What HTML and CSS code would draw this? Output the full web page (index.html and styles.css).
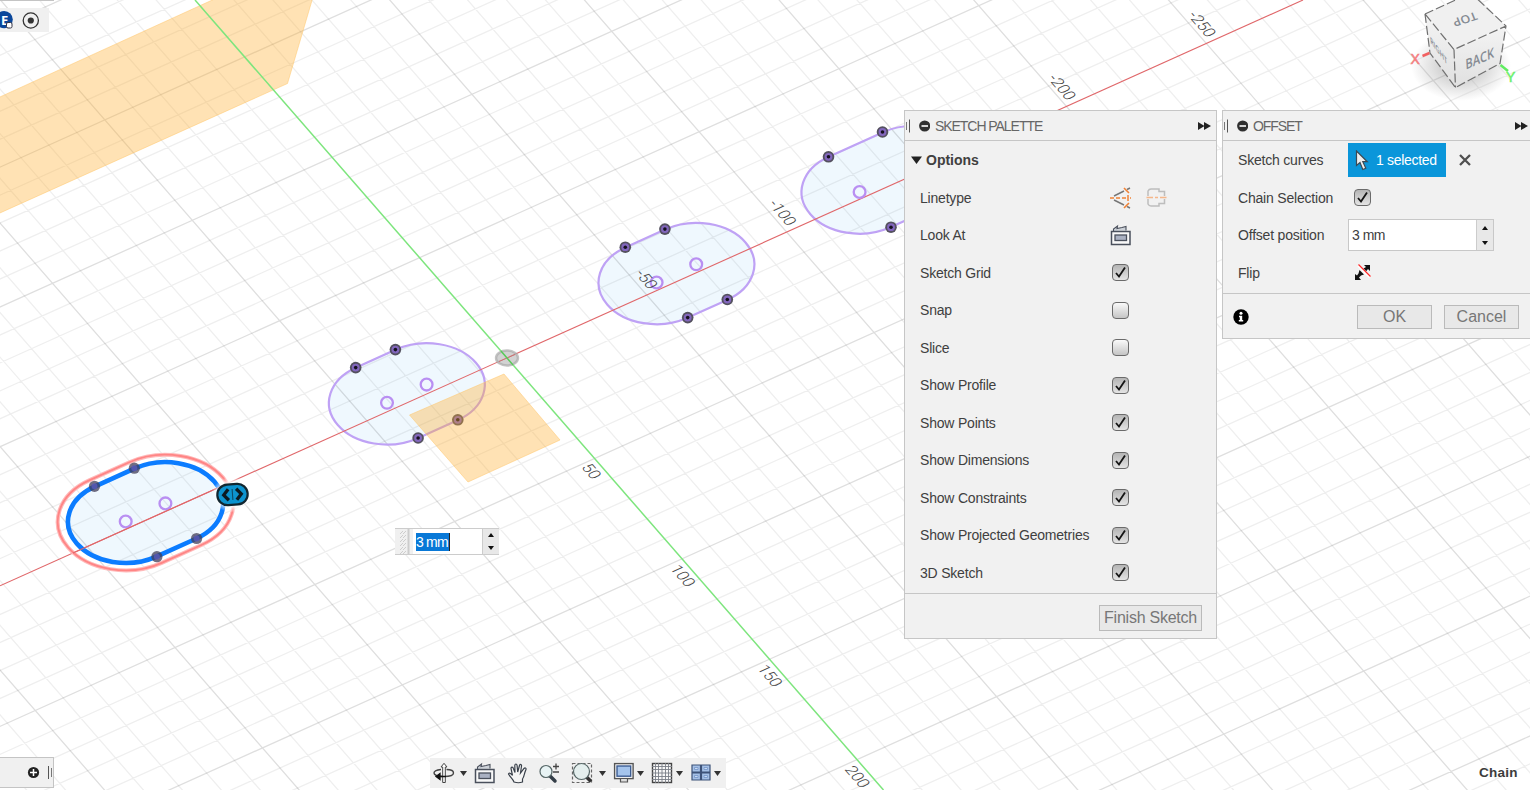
FILE: index.html
```html
<!DOCTYPE html>
<html lang="en">
<head>
<meta charset="utf-8">
<title>Sketch</title>
<link rel="stylesheet" href="styles.css">
</head>
<body>
<main class="app">
  <svg class="canvas" width="1530" height="790" viewBox="0 0 1530 790">
    <defs>
      <radialGradient id="halo"><stop offset=".62" stop-color="#fff"/><stop offset="1" stop-color="#fff" stop-opacity="0"/></radialGradient>
      <radialGradient id="shade"><stop offset=".3" stop-color="#999" stop-opacity=".5"/><stop offset="1" stop-color="#999" stop-opacity="0"/></radialGradient>
      <linearGradient id="side" x1="0" y1="0" x2="0" y2="1"><stop offset="0" stop-color="#f4f4f4"/><stop offset="1" stop-color="#e0e0e0"/></linearGradient>
      <g id="pt"><circle r="5.8" fill="#54515f"/><circle r="3.9" fill="#8266bd"/><circle r="1.8" fill="#15101f"/></g>
      <g id="pt-sel"><circle r="5.6" fill="#413e58" opacity=".75"/><circle r="3" fill="#5a59b8" opacity=".8"/></g>
      <circle id="ctr" r="5.9" class="centre"/>
    </defs>

    <!-- profile fills -->
    <g class="profile">
      <rect x="-1.76" y="-1.76" width="4.94" height="3.52" rx="1.76" transform="matrix(27.96 -12.6 17.49 20.08 125.7 521.5)"/>
      <rect x="-1.76" y="-1.76" width="4.94" height="3.52" rx="1.76" transform="matrix(27.96 -12.6 17.49 20.08 387 402.8)"/>
      <rect x="-1.76" y="-1.76" width="4.94" height="3.52" rx="1.76" transform="matrix(27.96 -12.6 17.49 20.08 656.6 282.5)"/>
      <rect x="-1.76" y="-1.76" width="5.46" height="3.52" rx="1.76" transform="matrix(27.96 -12.6 17.49 20.08 859.6 192)"/>
    </g>

    <g transform="matrix(27.96 -12.6 17.49 20.08 507 358.1)">
      <path id="minor" class="grid-minor"/>
      <path id="major" class="grid-major"/>
    </g>

    <g class="slot">
      <rect x="-1.76" y="-1.76" width="4.94" height="3.52" rx="1.76" transform="matrix(27.96 -12.6 17.49 20.08 387 402.8)"/>
      <rect x="-1.76" y="-1.76" width="4.94" height="3.52" rx="1.76" transform="matrix(27.96 -12.6 17.49 20.08 656.6 282.5)"/>
      <rect x="-1.76" y="-1.76" width="5.46" height="3.52" rx="1.76" transform="matrix(27.96 -12.6 17.49 20.08 859.6 192)"/>
    </g>

    <path class="axis-x" d="M0 585.8 1303 0"/>
    <use href="#ctr" x="387" y="402.8"/><use href="#ctr" x="426.6" y="384.6"/>
    <use href="#ctr" x="656.6" y="282.5"/><use href="#ctr" x="696.2" y="264.3"/><use href="#ctr" x="859.6" y="192"/>
    <use href="#pt" x="355.7" y="367.6"/><use href="#pt" x="395.4" y="349.6"/><use href="#pt" x="418.1" y="438"/><use href="#pt" x="457.8" y="419.8"/>
    <use href="#pt" x="625.3" y="247.2"/><use href="#pt" x="664.9" y="229.1"/><use href="#pt" x="687.7" y="317.6"/><use href="#pt" x="727.3" y="299.5"/>
    <use href="#pt" x="828.5" y="156.8"/><use href="#pt" x="882.5" y="132"/><use href="#pt" x="891" y="227.2"/>

    <!-- construction planes -->
    <g class="plane">
      <path d="M-3 98.300 213-.3V-3H313L287.500 83.500-3 214.300z"/>
      <path d="M409.500 415 504 374 560 440 468 482z"/>
    </g>
    <path class="axis-y" d="M195 0 883.500 790"/>
    <ellipse cx="507" cy="358" rx="11" ry="7.500" fill="#b4b4b4" fill-opacity=".6" stroke="#aaa" stroke-opacity=".7" stroke-width="2.400"/>
    <path d="M499 361.500 515 354.500" stroke="#c66" stroke-width=".8"/><path d="M501 351 513 365" stroke="#5c5" stroke-width="1.200"/>

    <g class="scale">
      <text transform="matrix(.67 .77 -.95 .43 586.500 473.500)">50</text>
      <text transform="matrix(.67 .77 -.95 .43 677.800 578)">100</text>
      <text transform="matrix(.67 .77 -.95 .43 765 678)">150</text>
      <text transform="matrix(.67 .77 -.95 .43 852.500 779)">200</text>
      <text transform="matrix(.67 .77 -.95 .43 777.500 215)">-100</text>
      <text transform="matrix(.67 .77 -.95 .43 641.500 281.500)">-50</text>
      <text transform="matrix(.67 .77 -.95 .43 1057 89.500)">-200</text>
      <text transform="matrix(.67 .77 -.95 .43 1197 26.500)">-250</text>
    </g>

    <!-- selected slot and its offset preview -->
    <g transform="matrix(27.96 -12.6 17.49 20.08 125.7 521.5)">
      <rect class="offset-glow" x="-2.06" y="-2.06" width="5.54" height="4.12" rx="2.06"/>
      <rect class="offset-line" x="-2.06" y="-2.06" width="5.54" height="4.12" rx="2.06"/>
      <rect class="selected" x="-1.75" y="-1.75" width="4.92" height="3.5" rx="1.75"/>
    </g>
    <use href="#ctr" x="125.700" y="521.500"/><use href="#ctr" x="165.400" y="503.400"/>
    <use href="#pt-sel" x="94.500" y="486.300"/><use href="#pt-sel" x="134.300" y="468.200"/><use href="#pt-sel" x="156.900" y="556.700"/><use href="#pt-sel" x="196.600" y="538.500"/>
    <path d="M73 553 230 482.400" class="axis-x"/>
    <ellipse cx="232.500" cy="494.500" rx="21" ry="18" fill="url(#halo)"/>
    <g transform="rotate(-4 232.5 494.5)">
      <rect x="217.300" y="484.200" width="30.400" height="20.600" rx="10.300" fill="#0d93cf" stroke="#12262f" stroke-width="2.200"/>
      <path d="M228.500 489 223.700 494.500 228.500 500M236.500 489 241.300 494.500 236.500 500" fill="none" stroke="#0c1a22" stroke-width="3.300"/>
      <path d="M232.500 489v11" stroke="#0d4b68" stroke-width="1.100"/>
    </g>

    <!-- view cube -->
    <ellipse cx="1461" cy="66" rx="50" ry="35" fill="url(#shade)"/>
    <path d="M1425 14 1471-7 1506 26 1454 49.500z" fill="#f0f0f0"/>
    <path d="M1425 14 1454 49.500 1455.500 87.500 1430 53z" fill="url(#side)"/>
    <path d="M1454 49.500 1506 26 1500 63.500 1455.500 87.500z" fill="url(#side)"/>
    <path d="M1425 14 1471-7 1506 26 1454 49.500zM1425 14 1430 53 1455.500 87.500 1500 63.500 1506 26M1454 49.500 1455.500 87.500" fill="none" stroke="#707070" stroke-width="1.200" stroke-dasharray="9 3"/>
    <text class="face" font-size="14" transform="matrix(-.85 .27 -.3 -.75 1463.5 15.5)">TOP</text>
    <text class="face" font-size="14" transform="matrix(.78 -.34 .05 1 1480 63.5)">BACK</text>
    <text class="face" font-size="10.500" transform="matrix(.55 .72 .1 .9 1439 54)">RIGHT</text>
    <path d="M1422.500 56 1429.500 53" stroke="#f26060" stroke-width="2.500"/><text x="1410.500" y="63.800" class="axis-name" fill="#f58080" stroke="#f58080">X</text>
    <path d="M1500.500 65 1508 71" stroke="#60ec60" stroke-width="2.500"/><text x="1506" y="81.500" class="axis-name" fill="#6cf06c" stroke="#6cf06c">Y</text>
  </svg>

  <div class="edge-line"></div>
  <div class="browser-chip">
    <svg width="49" height="24" viewBox="0 8 49 24">
      <circle cx="4.200" cy="19.600" r="8.600" fill="#0b479b"/><text x="1" y="25" font-family="Open Sans" font-size="13" font-weight="700" fill="#fff">E</text>
      <rect x="6.500" y="22.500" width="5.500" height="5.500" rx="1.500" fill="#fff" stroke="#334" stroke-width="1"/>
      <circle cx="30.800" cy="20.500" r="7.600" fill="none" stroke="#333" stroke-width="1.300"/><circle cx="30.800" cy="20.500" r="3.100" fill="#333"/>
    </svg>
  </div>

  <div class="value-box">
    <svg class="grip" width="18" height="25"><path d="M5 25l3-3M5 21l3-3M5 17l3-3M5 13l3-3M5 9l3-3M5 5l3-3M8 25l3-3M8 21l3-3M8 17l3-3M8 13l3-3M8 9l3-3M8 5l3-3" stroke="#c4c4c4" stroke-width=".8"/><path d="M13.500 0v27" stroke="#ccc" stroke-width="2"/></svg>
    <div class="value-text"><span>3 mm</span></div>
    <div class="spin"><i class="up"></i><i class="down"></i></div>
  </div>

  <section class="panel palette">
    <header class="panel-head">
      <svg width="25" height="20" viewBox="0 0 25 20"><path d="M1.500 6v8" stroke="#777"/><path d="M4.500 3.500v13" stroke="#555"/><circle cx="19.700" cy="10" r="5.600" fill="#303030"/><path d="M16.500 10h6.500" stroke="#fff" stroke-width="1.600"/></svg>
      <h2>SKETCH PALETTE</h2>
      <svg class="ff" width="13" height="10" viewBox="0 0 13 10"><path d="M0 1 6.500 5 0 9zM6 1 13 5 6 9z" fill="#222"/></svg>
    </header>
    <div class="rows">
      <div class="row group"><svg width="11" height="8" viewBox="0 0 11 8"><path d="M0 .5h11L5.500 8z" fill="#222"/></svg><b>Options</b></div>
      <div class="row"><span>Linetype</span>
        <div class="tools">
          <svg width="22" height="22" viewBox="0 0 22 22" fill="none"><path d="M4 9 14 4M17 2.500 20 1M4 13 14 18M17 19.500 20 21" stroke="#777" stroke-width="1.500"/><path d="M0 11h4M6 11h4M12 11h4M20 11h1M14 1l5 5M14 21l5-5" stroke="#f08236" stroke-width="1.600"/><path d="M18 8v6" stroke="#f08236" stroke-width="1.500"/></svg>
          <svg width="22" height="22" viewBox="0 0 22 22" fill="none"><path d="M2 9V4q1-2 3-2h8v2.500h5.500V9M2 12v5q1 2 3 2h8v-2.500h5.500V12" stroke="#bdbdbd" stroke-width="1.500"/><path d="M.5 10.500H7M9 10.500h3M14 10.500h6.500" stroke="#f5b78b" stroke-width="1.300"/></svg>
        </div></div>
      <div class="row"><span>Look At</span>
        <svg class="look" width="22" height="22" viewBox="0 0 22 22"><use href="#i-look"/></svg></div>
      <div class="row"><span>Sketch Grid</span><i class="check on"><svg viewBox="0 0 17 17"><path d="M4 9l3 3.500L13 3.500"/></svg></i></div>
      <div class="row"><span>Snap</span><i class="check"></i></div>
      <div class="row"><span>Slice</span><i class="check"></i></div>
      <div class="row"><span>Show Profile</span><i class="check on"><svg viewBox="0 0 17 17"><path d="M4 9l3 3.500L13 3.500"/></svg></i></div>
      <div class="row"><span>Show Points</span><i class="check on"><svg viewBox="0 0 17 17"><path d="M4 9l3 3.500L13 3.500"/></svg></i></div>
      <div class="row"><span>Show Dimensions</span><i class="check on"><svg viewBox="0 0 17 17"><path d="M4 9l3 3.500L13 3.500"/></svg></i></div>
      <div class="row"><span>Show Constraints</span><i class="check on"><svg viewBox="0 0 17 17"><path d="M4 9l3 3.500L13 3.500"/></svg></i></div>
      <div class="row"><span>Show Projected Geometries</span><i class="check on"><svg viewBox="0 0 17 17"><path d="M4 9l3 3.500L13 3.500"/></svg></i></div>
      <div class="row"><span>3D Sketch</span><i class="check on"><svg viewBox="0 0 17 17"><path d="M4 9l3 3.500L13 3.500"/></svg></i></div>
    </div>
    <footer class="panel-foot"><button class="btn finish">Finish Sketch</button></footer>
  </section>

  <section class="panel offset">
    <header class="panel-head">
      <svg width="25" height="20" viewBox="0 0 25 20"><path d="M1.500 6v8" stroke="#777"/><path d="M4.500 3.500v13" stroke="#555"/><circle cx="19.700" cy="10" r="5.600" fill="#303030"/><path d="M16.500 10h6.500" stroke="#fff" stroke-width="1.600"/></svg>
      <h2>OFFSET</h2>
      <svg class="ff" width="13" height="10" viewBox="0 0 13 10"><path d="M0 1 6.500 5 0 9zM6 1 13 5 6 9z" fill="#222"/></svg>
    </header>
    <div class="rows">
      <div class="row"><span>Sketch curves</span>
        <div class="pick"><svg width="14" height="21" viewBox="0 0 14 21"><path d="M1.500 1v14.500l3.500-3 2.800 7 3-1.300-3-6.500h4.500z" fill="#eee" stroke="#3a4a55" stroke-width="1.200"/></svg>1 selected</div>
        <svg class="clear" width="12" height="12" viewBox="0 0 12 12"><path d="M1 1l10 10M11 1 1 11" stroke="#505050" stroke-width="2.300"/></svg></div>
      <div class="row"><span>Chain Selection</span><i class="check on"><svg viewBox="0 0 17 17"><path d="M4 9l3 3.500L13 3.500"/></svg></i></div>
      <div class="row"><span>Offset position</span>
        <div class="number"><div>3 mm</div><div class="spin"><i class="up"></i><i class="down"></i></div></div></div>
      <div class="row"><span>Flip</span>
        <svg class="flip" width="17" height="17" viewBox="0 0 17 17"><path d="M10 1h6v6l-2-2-3 3.500-3-3 4-2.500zM1 10l2 1.500 1.500-2 1-3.500 4.500 4.500-3 1-2 2L7 16H1z" fill="#111"/><path d="M4.500 1.500 16 13" fill="none" stroke="#fff" stroke-width="3"/><path d="M4.500 .5 16.500 12.500" fill="none" stroke="#ff2a2a" stroke-width="1.300"/></svg></div>
    </div>
    <footer class="panel-foot">
      <svg class="info" width="16" height="16" viewBox="0 0 16 16"><circle cx="8" cy="8" r="7.700" fill="#000"/><circle cx="8" cy="4.200" r="1.500" fill="#fff"/><path d="M6 6.800h3.200V11h1v1.500H5.800V11h1V8.200H6z" fill="#fff"/></svg>
      <button class="btn">OK</button><button class="btn">Cancel</button>
    </footer>
  </section>

  <div class="comments">
    <svg width="53" height="29" viewBox="0 758 53 29"><circle cx="33.500" cy="772.500" r="5.600" fill="#222"/><path d="M30 772.500h7M33.500 769v7" stroke="#fff" stroke-width="1.500"/><path d="M48.500 766v13" stroke="#555"/><path d="M51.500 768v9" stroke="#777"/></svg>
  </div>

  <nav class="navbar">
    <svg width="22" height="22" viewBox="0 0 22 22" fill="none"><path d="M8 7.500C3 8 1 9.500 1 11s3 3.500 10 3.500 9.500-1.500 9.500-3.500-3-3.500-7-3.500" stroke="#444" stroke-width="1.400"/><path d="M9.700 20.500V5H8l3-3.700L14 5h-1.700v15.500z" fill="#fff" stroke="#444"/><path d="M3 14.500 7 11.500v6zM7 14.500h6" fill="#111" stroke="#111" stroke-width="1.300"/></svg>
    <svg class="caret" width="7" height="5" viewBox="0 0 7 5"><path d="M0 0h7L3.500 5z"/></svg>
    <svg width="22" height="22" viewBox="0 0 22 22"><g id="i-look"><path d="M3.500 7V5l4-3-.5 2.500L12 3.500l4-1v4" fill="#cdd2d9" stroke="#4a505c" stroke-width="1.100"/><rect x="1.500" y="7.500" width="18.500" height="13" fill="#f8f8f8" stroke="#4a505c" stroke-width="1.500"/><rect x="5" y="11" width="11.500" height="5.500" fill="#aab1c2" stroke="#4a505c" stroke-width="1.300"/></g></svg>
    <svg width="22" height="22" viewBox="0 0 22 22"><path d="M8 20c-1-3-4-5-5.500-8 .5-1.500 2-1 4 1.500L5 6.500c0-1.800 1.800-2 2.300-.3L9 10.500 8.800 3.500c.2-2 2-2 2.300 0l.6 6.500 1.800-6.500c.6-1.600 2.300-1.200 2 .5L14.500 11l3.500-4.500c1.200-1.300 2.600-.2 1.800 1.400C18 11.500 18.500 14.500 16.500 17v3q-4 1.500-8.500 0z" fill="#f5f5f5" stroke="#39404a" stroke-width="1.200"/></svg>
    <svg width="22" height="22" viewBox="0 0 22 22"><path d="M11.500 13.500 17 19" stroke="#343e48" stroke-width="3.500" stroke-linecap="round"/><circle cx="8" cy="9.500" r="6" fill="#e8f3f4" stroke="#566" stroke-width="1.200"/><path d="M15 4.500h6M18 1.500v6M15 10h6" stroke="#444" stroke-width="1.300"/></svg>
    <svg width="22" height="22" viewBox="0 0 22 22"><path d="M1.500 1.500h19v19h-19z" fill="none" stroke="#666" stroke-width="1.200" stroke-dasharray="3 2"/><path d="M15 14.500 20 19.500" stroke="#333" stroke-width="3.500"/><circle cx="10.500" cy="9.500" r="8" fill="#e4efee" stroke="#566" stroke-width="1.200"/></svg>
    <svg class="caret" width="7" height="5" viewBox="0 0 7 5"><path d="M0 0h7L3.500 5z"/></svg>
    <svg width="22" height="22" viewBox="0 0 22 22"><rect x="1.600" y="1.600" width="18.500" height="15" fill="#fff" stroke="#555" stroke-width="1.400"/><rect x="4" y="4" width="13.700" height="10.200" fill="#a5c4ec" stroke="#3d5d92" stroke-width="1.400"/><path d="M7.500 17v3h7v-3" fill="#ddd" stroke="#555" stroke-width="1.200"/></svg>
    <svg class="caret" width="7" height="5" viewBox="0 0 7 5"><path d="M0 0h7L3.500 5z"/></svg>
    <svg width="22" height="22" viewBox="0 0 22 22"><rect x="1.500" y="1.500" width="19" height="19" fill="#f8f8f8" stroke="#444" stroke-width="1.400"/><path d="M4.500 1v20M7.500 1v20M11 1v20M14.500 1v20M17.500 1v20M1 4.500h20M1 7.500h20M1 11h20M1 14.500h20M1 17.500h20" stroke="#7b7f88" stroke-width=".9"/></svg>
    <svg class="caret" width="7" height="5" viewBox="0 0 7 5"><path d="M0 0h7L3.500 5z"/></svg>
    <svg width="22" height="22" viewBox="0 0 22 22" fill="#a5c0e6" stroke="#3d5278" stroke-width="1.200"><path d="M2 3h8.500v7H2zM11.500 3H20v7h-8.500zM2 11h8.500v7H2zM11.500 11H20v7h-8.500z"/><path d="M4.500 5.500h3.500v2H4.500zM14 5.500h3.500v2H14zM4.500 13.500h3.500v2H4.500zM14 13.500h3.500v2H14z" stroke="#7293c6" stroke-width=".8" fill="#c8daf2"/></svg>
    <svg class="caret" width="7" height="5" viewBox="0 0 7 5"><path d="M0 0h7L3.500 5z"/></svg>
  </nav>

  <div class="status">Chain</div>
</main>
<script src="grid.js"></script>
</body>
</html>
```

FILE: grid.js
```js
// Sketch grid in plane units of 10 mm; every fifth line is a major one.
const minor = [];
const major = [];
for (let i = -60; i <= 60; i++) {
  if (i === 0) continue;
  const target = i % 5 === 0 ? major : minor;
  target.push(`M${i} -60V60M-60 ${i}H60`);
}
document.getElementById("minor").setAttribute("d", minor.join(""));
document.getElementById("major").setAttribute("d", major.join(""));
```

FILE: styles.css
```css
* { box-sizing: border-box; }
body { margin: 0; font-family: "Liberation Sans", Arial, sans-serif; font-size: 14px; color: #404040; }
.app { position: relative; width: 1530px; height: 790px; overflow: hidden; background: #fff; }
.canvas { position: absolute; left: 0; top: 0; }
.canvas path, .canvas rect { vector-effect: non-scaling-stroke; }
.grid-minor { fill: none; stroke: #000; stroke-opacity: .066; stroke-width: 1.3; }
.grid-major { fill: none; stroke: #000; stroke-opacity: .13; stroke-width: 1.3; }
.profile { fill: #eff8fe; }
.slot { fill: none; stroke: #bfa2f5; stroke-width: 2.2; }
.centre { fill: none; stroke: #b98ff2; stroke-width: 2.3; }
.axis-x { fill: none; stroke: #e0676a; stroke-width: 1.1; }
.axis-y { fill: none; stroke: #7de57d; stroke-width: 1.5; }
.plane { fill: #ffae2e; fill-opacity: .36; stroke: #ffc568; stroke-opacity: .5; stroke-width: 1; }
.scale { font-family: Roboto, sans-serif; font-weight: 300; font-size: 15.3px; fill: #444; text-anchor: middle; }
.offset-glow { fill: none; stroke: #ffb9b9; stroke-width: 4; }
.offset-line { fill: none; stroke: #ff8585; stroke-width: 1.8; }
.selected { fill: none; stroke: #0b7cff; stroke-width: 4.6; }
.face { font-family: "Open Sans", sans-serif; font-weight: 600; fill: #858b93; text-anchor: middle; }
.axis-name { font-size: 14px; stroke-width: .5px; }

.edge-line { position: absolute; left: 0; top: 0; width: 54px; height: 1px; background: #c4c4c4; }
.browser-chip { position: absolute; left: 0; top: 8px; width: 49px; height: 24px; background: #f0f0f0; }
.browser-chip svg, .comments svg { display: block; }

.panel { position: absolute; top: 110px; background: #f1f1f1; border: 1px solid #c6c6c6; }
.palette { left: 904px; width: 313px; height: 529px; }
.offset { left: 1222px; width: 312px; height: 229px; }
.panel-head { display: flex; align-items: center; height: 30px; border-bottom: 1px solid #c6c6c6; }
.panel-head h2 { margin: 0 0 0 5px; flex: 1; font-size: 14px; font-weight: 400; color: #666; letter-spacing: -1.05px; }
.ff { margin-right: 5px; margin-top: 1px; }
.offset .panel-head h2 { letter-spacing: -1.1px; }
.rows { display: flex; flex-direction: column; height: 453px; padding-top: .5px; border-bottom: 1px solid #c6c6c6; }
.row { display: flex; align-items: center; height: 37.5px; flex: none; padding-left: 15px; letter-spacing: -.2px; }
.row > span { width: 192px; white-space: nowrap; }
.group { padding-left: 6px; gap: 4px; letter-spacing: 0; }
.tools { display: flex; gap: 14px; margin-left: -2px; }
.look { margin-left: -2px; }
.check { width: 17px; height: 17px; border: 1.5px solid #6b6b6b; border-radius: 4px; background: linear-gradient(#fafafa, #c5c5c5); }
.check.on { background: linear-gradient(#b5b5b5, #e4e4e4); }
.check svg { display: block; width: 17px; height: 17px; margin: -1px; }
.check path { fill: none; stroke: #151515; stroke-width: 1.8; }
.panel-foot { display: flex; align-items: center; justify-content: flex-end; height: 47px; padding-right: 14px; }
.btn { width: 75px; height: 24px; padding: 0; border: 1px solid #bababa; border-radius: 0; background: #e8e8e8; font: 16px "Liberation Sans", Arial, sans-serif; color: #777; }
.finish { width: 103px; height: 26px; letter-spacing: -.25px; }

.offset .rows { height: 153px; }
.offset .row > span { width: 110px; }
.offset .row .check, .flip { margin-left: 6px; }
.pick { display: flex; align-items: center; gap: 7px; width: 98px; height: 34px; padding-left: 7px; background: #0a96da; color: #fff; white-space: nowrap; letter-spacing: -.3px; }
.clear { margin-left: 13px; }
.number { display: flex; width: 146px; height: 32px; border: 1px solid #c8c8c8; background: #fff; }
.number > div:first-child { flex: 1; padding: 7px 0 0 3px; line-height: 16px; letter-spacing: -.5px; }
.spin { display: grid; grid-template-rows: 1fr 1fr; width: 17px; background: #e8e8e8; border-left: 1px solid #ccc; place-items: center; }
.up, .down { width: 0; height: 0; border: 3px solid transparent; }
.up { border-top: 0; border-bottom: 4px solid #111; }
.down { border-bottom: 0; border-top: 4px solid #111; }
.offset .panel-foot { height: 45px; gap: 12px; }
.info { margin-right: auto; margin-left: 10px; }

.value-box { position: absolute; left: 395px; top: 528px; display: flex; width: 104px; height: 27px; background: #f0f0f0; border-bottom: 1px solid #ccc; border-top: 1px solid #ccc; }
.value-text { width: 69px; padding: 4px 0 0 3px; background: #fff; }
.value-text span { display: inline-block; height: 18px; line-height: 18px; padding-right: 1px; border-right: 1px solid #222; background: #0878d7; color: #fff; letter-spacing: -.8px; }
.comments { position: absolute; left: 0; top: 757px; width: 54px; height: 31px; background: #f0f0f0; border: 1px solid #c4c4c4; border-left: 0; }
.navbar { position: absolute; left: 430px; top: 758px; display: grid; grid-template-columns: 27px 14px 32px 32px 33px 27.5px 14.5px 23.5px 14.5px 24.5px 14.5px 23.5px 12px; align-items: center; width: 296px; height: 30px; padding-left: 3px; background: #f0f0f0; }
.caret { fill: #333; }
.status { position: absolute; left: 1479px; top: 765px; font: 700 13.5px/15px "Liberation Sans", Arial, sans-serif; letter-spacing: .25px; color: #3c3c3c; }
```
